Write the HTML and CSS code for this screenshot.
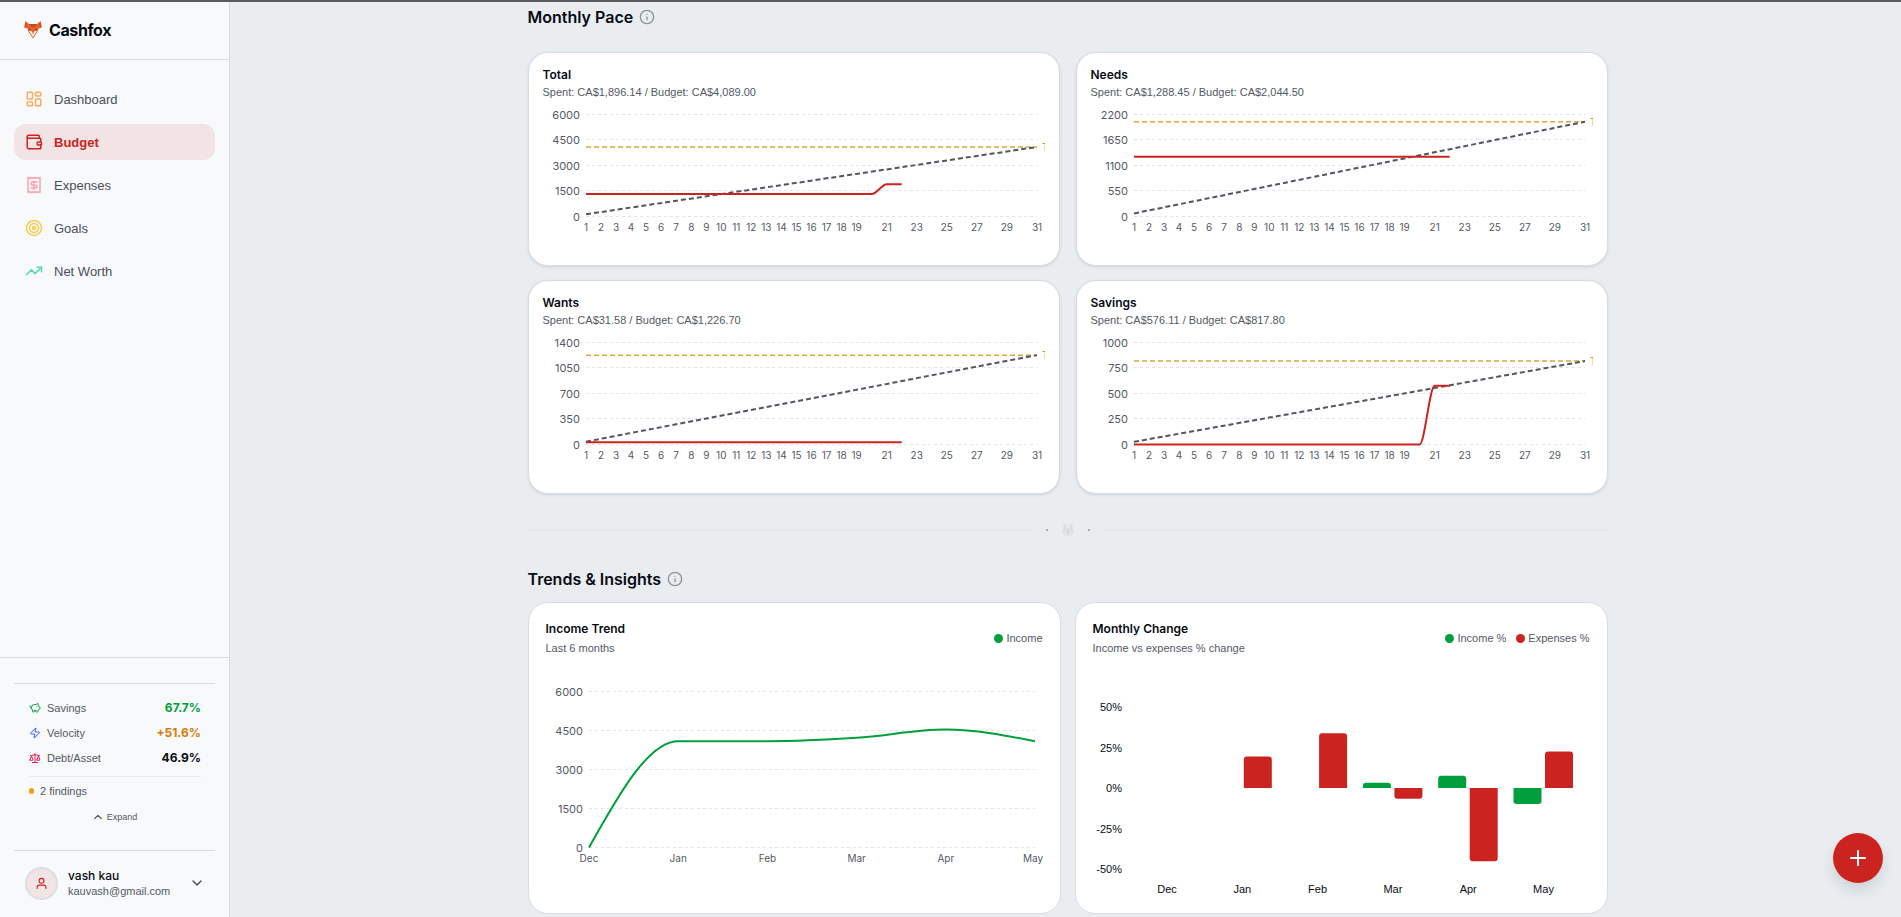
FILE: index.html
```html
<!DOCTYPE html>
<html lang="en">
<head>
    <meta charset="UTF-8">
    <meta name="viewport" content="width=device-width, initial-scale=1.0">
    <title>Cashfox - Budget</title>
    <link rel="stylesheet" href="styles.css">
</head>
<body>

    <aside class="sidebar">
        <a href="#" class="brand">
            <svg class="brand-logo" viewBox="0 0 18 18" aria-hidden="true">
                <path fill="#e8602f" d="M1.500 0 L5 3 H13 L16.500 0 L18 6.500 L14.500 7.500 L14 10 L9 17.500 L4 10 L3.500 7.500 L0 6.500 Z"/>
                <path fill="#c24a22" d="M5 3 H13 L11 6 H7 Z M1.500 1 L3 4 L1 6 Z M16.500 1 L15 4 L17 6 Z"/>
                <path fill="#fff" d="M4.800 9.500 L8 10.500 L9 14 L10 10.500 L13.200 9.500 L9 16 Z"/>
                <path fill="#3a2a28" d="M5 7.500 L7 8.500 L5.500 9 Z M13 7.500 L11 8.500 L12.500 9 Z"/>
            </svg>
            Cashfox
        </a>

        <nav class="nav">
            <a href="#" class="nav-link dashboard">
                <svg viewBox="0 0 24 24"><rect width="7" height="9" x="3" y="3" rx="1"/><rect width="7" height="5" x="14" y="3" rx="1"/><rect width="7" height="9" x="14" y="12" rx="1"/><rect width="7" height="5" x="3" y="16" rx="1"/></svg>
                Dashboard
            </a>
            <a href="#" class="nav-link active">
                <svg viewBox="0 0 24 24"><path d="M19 7V4a1 1 0 0 0-1-1H5a2 2 0 0 0 0 4h15a1 1 0 0 1 1 1v4h-3a2 2 0 0 0 0 4h3a1 1 0 0 0 1-1v-2a1 1 0 0 0-1-1"/><path d="M3 5v14a2 2 0 0 0 2 2h15a1 1 0 0 0 1-1v-4"/></svg>
                Budget
            </a>
            <a href="#" class="nav-link expenses">
                <svg viewBox="0 0 24 24"><path d="M4 2v20l2-1 2 1 2-1 2 1 2-1 2 1 2-1 2 1V2l-2 1-2-1-2 1-2-1-2 1-2-1-2 1Z"/><path d="M16 8h-6a2 2 0 1 0 0 4h4a2 2 0 1 1 0 4H8"/><path d="M12 17.500v-11"/></svg>
                Expenses
            </a>
            <a href="#" class="nav-link goals">
                <svg viewBox="0 0 24 24"><circle cx="12" cy="12" r="10"/><circle cx="12" cy="12" r="6"/><circle cx="12" cy="12" r="2"/></svg>
                Goals
            </a>
            <a href="#" class="nav-link networth">
                <svg viewBox="0 0 24 24"><path d="M22 7 13.500 15.500 8.500 10.500 2 17"/><path d="M16 7h6v6"/></svg>
                Net Worth
            </a>
        </nav>

        <div class="sidebar-bottom">
            <div class="health">
                <div class="health-row">
                    <svg class="green" viewBox="0 0 24 24"><path d="M11 17h3v2a1 1 0 0 0 1 1h2a1 1 0 0 0 1-1v-3a3.160 3.160 0 0 0 2-2h1a1 1 0 0 0 1-1v-2a1 1 0 0 0-1-1h-1a5 5 0 0 0-2-4V3a4 4 0 0 0-3.200 1.600l-.3.400H11a6 6 0 0 0-6 6v1a5 5 0 0 0 2 4v3a1 1 0 0 0 1 1h2a1 1 0 0 0 1-1z"/><path d="M16 10h.01"/><path d="M2 8v1a2 2 0 0 0 2 2h1"/></svg>
                    <span>Savings</span>
                    <strong class="green">67.7%</strong>
                </div>
                <div class="health-row">
                    <svg class="blue" viewBox="0 0 24 24"><path d="M4 14a1 1 0 0 1-.78-1.630l9.900-10.200a.5.5 0 0 1 .86.460l-1.920 6.020A1 1 0 0 0 13 10h7a1 1 0 0 1 .78 1.630l-9.900 10.200a.5.5 0 0 1-.86-.46l1.920-6.020A1 1 0 0 0 11 14z"/></svg>
                    <span>Velocity</span>
                    <strong class="orange">+51.6%</strong>
                </div>
                <div class="health-row">
                    <svg class="pink" viewBox="0 0 24 24"><path d="m16 16 3-8 3 8c-.87.650-1.920 1-3 1s-2.130-.35-3-1Z"/><path d="m2 16 3-8 3 8c-.87.650-1.920 1-3 1s-2.130-.35-3-1Z"/><path d="M7 21h10"/><path d="M12 3v18"/><path d="M3 7h2c2 0 5-1 7-2 2 1 5 2 7 2h2"/></svg>
                    <span>Debt/Asset</span>
                    <strong>46.9%</strong>
                </div>
                <div class="findings"><i></i>2 findings</div>
                <button class="expand" type="button">
                    <svg viewBox="0 0 24 24"><path d="m20 16-8-8-8 8"/></svg>
                    Expand
                </button>
            </div>

            <button class="user" type="button">
                <span class="avatar">
                    <svg viewBox="0 0 24 24"><circle cx="12" cy="7" r="4.500"/><path d="M20 21v-2a4 4 0 0 0-4-4H8a4 4 0 0 0-4 4v2"/></svg>
                </span>
                <span class="user-text">
                    <span class="user-name">vash kau</span>
                    <span class="user-mail">kauvash@gmail.com</span>
                </span>
                <svg class="chevron" viewBox="0 0 24 24"><path d="m6 9 6 6 6-6"/></svg>
            </button>
        </div>
    </aside>

    <main class="main">
        <div class="content">
            <h2 class="section-title">
                Monthly Pace
                <svg viewBox="0 0 24 24"><circle cx="12" cy="12" r="10"/><path d="M12 16v-4"/><path d="M12 8h.01"/></svg>
            </h2>

            <section class="pace-grid">
                <article class="card pace-card">
                    <h3>Total</h3>
                    <p>Spent: CA$1,896.14 / Budget: CA$4,089.00</p>
                    <svg class="chart" id="pace-total" viewBox="0 0 502 144"></svg>
                </article>
                <article class="card pace-card">
                    <h3>Needs</h3>
                    <p>Spent: CA$1,288.45 / Budget: CA$2,044.50</p>
                    <svg class="chart" id="pace-needs" viewBox="0 0 502 144"></svg>
                </article>
                <article class="card pace-card">
                    <h3>Wants</h3>
                    <p>Spent: CA$31.58 / Budget: CA$1,226.70</p>
                    <svg class="chart" id="pace-wants" viewBox="0 0 502 144"></svg>
                </article>
                <article class="card pace-card">
                    <h3>Savings</h3>
                    <p>Spent: CA$576.11 / Budget: CA$817.80</p>
                    <svg class="chart" id="pace-savings" viewBox="0 0 502 144"></svg>
                </article>
            </section>

            <div class="divider">
                <span class="line"></span>
                <span class="dot"></span>
                <svg viewBox="0 0 12 14" aria-hidden="true"><path fill="#dcdfe0" d="M2 1 Q3 0 4 1 L5 5 H7 L8 1 Q9 0 10 1 L11 6 L12 9 Q10 13 6 13 Q2 13 0 9 L1 6 Z"/><path fill="#e4e7e8" d="M1 9 L5 9 L6 12 L7 9 L11 9 L9 12 H3 Z"/><path fill="#bfc2c4" d="M5 9h2l-1 2z"/></svg>
                <span class="dot"></span>
                <span class="line"></span>
            </div>

            <h2 class="section-title">
                Trends &amp; Insights
                <svg viewBox="0 0 24 24"><circle cx="12" cy="12" r="10"/><path d="M12 16v-4"/><path d="M12 8h.01"/></svg>
            </h2>

            <section class="trend-grid">
                <article class="card trend-card">
                    <header>
                        <div>
                            <h3>Income Trend</h3>
                            <p>Last 6 months</p>
                        </div>
                        <div class="legend">
                            <span><i class="bg-green"></i>Income</span>
                        </div>
                    </header>
                    <svg class="chart" id="income-trend" viewBox="0 0 497 230"></svg>
                </article>
                <article class="card trend-card">
                    <header>
                        <div>
                            <h3>Monthly Change</h3>
                            <p>Income vs expenses % change</p>
                        </div>
                        <div class="legend">
                            <span><i class="bg-green"></i>Income %</span>
                            <span><i class="bg-red"></i>Expenses %</span>
                        </div>
                    </header>
                    <svg class="chart" id="monthly-change" viewBox="0 0 497 230"></svg>
                </article>
            </section>
        </div>
    </main>

    <button class="fab" type="button" aria-label="Add">
        <svg viewBox="0 0 24 24"><path d="M5 12h14"/><path d="M12 5v14"/></svg>
    </button>

    <script src="script.js"></script>
</body>
</html>
```
FILE: styles.css
```css
* {
    box-sizing: border-box;
}

body {
    margin: 0;
    height: 100vh;
    overflow: hidden;
    display: flex;
    border-top: 2px solid #5b5a5c;
    background: #e9edf0;
    color: #070b14;
    font-family: "Liberation Sans", Arial, sans-serif;
    font-size: 13px;
}

h2, h3, p {
    margin: 0;
}

h2, h3, strong, .brand, .user-name {
    font-family: Inter, "Liberation Sans", sans-serif;
}

a {
    color: inherit;
    text-decoration: none;
}

button {
    font-family: inherit;
    color: inherit;
    border: none;
    background: none;
    padding: 0;
    cursor: pointer;
}

svg {
    fill: none;
    stroke: currentColor;
    stroke-width: 2;
    stroke-linecap: round;
    stroke-linejoin: round;
    flex-shrink: 0;
}

/* sidebar */
.sidebar {
    width: 230px;
    flex-shrink: 0;
    display: flex;
    flex-direction: column;
    background: #f7f9fb;
    border-right: 1px solid #d8dbe1;
}

.brand {
    height: 58px;
    display: flex;
    align-items: center;
    gap: 7px;
    padding: 0 24px 2px;
    border-bottom: 1px solid #d8dbe1;
    font-size: 16px;
    font-weight: 700;
    letter-spacing: -0.4px;
}

.brand-logo {
    width: 18px;
    height: 18px;
    stroke: none;
}

.nav {
    flex: 1;
    display: flex;
    flex-direction: column;
    gap: 7px;
    padding: 21px 14px;
}

.nav-link {
    height: 36px;
    display: flex;
    align-items: center;
    gap: 11px;
    padding: 0 11px;
    border-radius: 12px;
    color: #4a4f5a;
    font-weight: 500;
}

.nav-link svg {
    width: 18px;
    height: 18px;
}

.nav-link.active {
    background: #f2e3e4;
    color: #cb2420;
    font-weight: 600;
}

.dashboard svg { color: #fbab5c; }
.expenses svg { color: #fba3b3; }
.goals svg { color: #f9cb4a; }
.networth svg { color: #58dcae; }

.sidebar-bottom {
    padding: 25px 14px 12px;
    border-top: 1px solid #d8dbe1;
}

.health {
    padding: 11px 14px 0 15px;
    border-top: 1px solid #d8dbe1;
    border-bottom: 1px solid #d8dbe1;
    height: 168px;
}

.health-row {
    height: 25px;
    display: flex;
    align-items: center;
    gap: 6px;
    color: #545964;
    font-size: 11px;
}

.health-row svg {
    width: 12px;
    height: 12px;
}

.health-row strong {
    margin-left: auto;
    color: #070b14;
    font-size: 12px;
}

.health-row .green { color: #009e3c; }
.health-row .blue { color: #3b5bf0; }
.health-row .orange { color: #d97a06; }
.health-row .pink { color: #ec1556; }

.findings {
    margin-top: 6px;
    padding-top: 5px;
    border-top: 1px solid #e6e9ed;
    display: flex;
    align-items: center;
    gap: 6px;
    line-height: 18px;
    font-size: 11px;
    color: #545964;
}

.findings i {
    width: 5px;
    height: 6px;
    border-radius: 3px;
    background: #f59e0b;
}

.expand {
    width: 100%;
    height: 16px;
    margin-top: 9px;
    display: flex;
    align-items: center;
    justify-content: center;
    gap: 4px;
    font-size: 9px;
    color: #545964;
}

.expand svg {
    width: 10px;
    height: 10px;
    stroke-width: 3;
}

.user {
    width: 100%;
    height: 54px;
    display: flex;
    align-items: center;
    padding: 10px 10px 0 11px;
    text-align: left;
}

.avatar {
    width: 33px;
    height: 33px;
    display: flex;
    align-items: center;
    justify-content: center;
    margin-right: 10px;
    border: 2px solid #dbdfe5;
    border-radius: 50%;
    background: #f2e3e4;
    color: #cb2420;
}

.avatar svg {
    width: 13px;
    height: 13px;
}

.user-text {
    flex: 1;
    display: flex;
    flex-direction: column;
}

.user-name {
    font-size: 12px;
    font-weight: 500;
    line-height: 17px;
}

.user-mail {
    font-size: 11px;
    line-height: 15px;
    color: #545964;
}

.chevron {
    width: 16px;
    height: 16px;
    color: #3f444e;
}

/* page content */
.main {
    flex: 1;
    min-width: 0;
    padding: 3px 0 0 4px;
}

.content {
    max-width: 1080px;
    margin: 0 auto;
}

.section-title {
    display: flex;
    align-items: center;
    gap: 6px;
    line-height: 24px;
    font-size: 16px;
    font-weight: 600;
}

.section-title svg {
    width: 16px;
    height: 16px;
    color: #8e939b;
}

.card {
    background: #fff;
    border: 1px solid #d8dbe1;
    border-radius: 20px;
}

.card h3 {
    font-size: 12px;
    font-weight: 600;
}

.card p {
    font-size: 11px;
    color: #545964;
}

.chart {
    display: block;
    width: 100%;
    overflow: hidden;
}

.pace-grid {
    display: grid;
    grid-template-columns: 1fr 1fr;
    gap: 14px 16px;
    margin-top: 23px;
}

.pace-card {
    padding: 14px;
    box-shadow: 0 1px 3px rgba(20, 30, 50, 0.12);
}

.pace-card h3 {
    line-height: 16px;
}

.pace-card p {
    line-height: 18px;
    margin-bottom: 6px;
}

.divider {
    display: flex;
    align-items: center;
    margin: 28px 0 29px;
    height: 16px;
}

.divider .line {
    flex: 1;
    height: 1px;
    background: #e2e5e8;
}

.divider .dot {
    width: 2px;
    height: 2px;
    margin: 0 14px;
    background: #a9adb3;
}

.divider svg {
    width: 12px;
    height: 14px;
    stroke: none;
}

.trend-grid {
    display: grid;
    grid-template-columns: 1fr 1fr;
    gap: 14px;
    margin-top: 11px;
}

.trend-card {
    padding: 17px;
}

.trend-card header {
    display: flex;
    align-items: center;
    justify-content: space-between;
    margin-bottom: 8px;
}

.trend-card h3 {
    line-height: 18px;
}

.trend-card p {
    line-height: 20px;
}

.legend {
    display: flex;
    gap: 10px;
    line-height: 16px;
    padding-bottom: 2px;
    font-size: 11px;
    color: #545964;
}

.legend span {
    display: flex;
    align-items: center;
    gap: 3px;
}

.legend i {
    width: 9px;
    height: 9px;
    border-radius: 50%;
}

.bg-green { background: #009e3c; }
.bg-red { background: #cb2420; }

/* chart parts */
.chart text {
    stroke: none;
    fill: #545964;
    font-family: Inter, "Liberation Sans", sans-serif;
    font-size: 10px;
}

.chart .tick-y {
    font-size: 11px;
}

.chart .dark {
    fill: #070b14;
    font-family: "Liberation Sans", Arial, sans-serif;
    font-size: 11px;
}

.chart .grid {
    stroke: #e1e4e9;
    stroke-width: 1;
    stroke-dasharray: 3 3;
    stroke-linecap: butt;
}

.chart .target {
    stroke: #dba53a;
    stroke-dasharray: 5 3;
    stroke-linecap: butt;
}

.chart .ideal {
    stroke: #51565f;
    stroke-dasharray: 5 3;
    stroke-linecap: butt;
}

.chart .spent {
    stroke: #cb2420;
    stroke-linecap: butt;
}

.chart .income {
    stroke: #009e3c;
    stroke-linecap: butt;
}

.chart .bar-green {
    stroke: none;
    fill: #009e3c;
}

.chart .bar-red {
    stroke: none;
    fill: #cb2420;
}

.chart .target-label {
    fill: #a87f2c;
}

/* floating action button */
.fab {
    position: fixed;
    right: 18px;
    bottom: 34px;
    width: 50px;
    height: 50px;
    display: flex;
    align-items: center;
    justify-content: center;
    border-radius: 50%;
    background: #cb2420;
    color: #fff;
    box-shadow: 0 8px 14px rgba(20, 30, 50, 0.12);
}

.fab svg {
    width: 24px;
    height: 24px;
}
```
FILE: script.js
```js
const NS = 'http://www.w3.org/2000/svg';

function add(svg, tag, attrs, text) {
    const el = document.createElementNS(NS, tag);
    for (const key in attrs) {
        el.setAttribute(key, attrs[key]);
    }
    if (text !== undefined) {
        el.textContent = text;
    }
    svg.appendChild(el);
    return el;
}

function label(svg, x, y, text, anchor, cls) {
    add(svg, 'text', { x: x, y: y, 'text-anchor': anchor, 'dominant-baseline': 'central', class: cls || '' }, text);
}

// monotone cubic curve through the points
function curve(points) {
    const n = points.length;
    const slopes = [];
    const tangents = [];
    for (let i = 0; i < n - 1; i++) {
        slopes.push((points[i + 1][1] - points[i][1]) / (points[i + 1][0] - points[i][0]));
    }
    for (let i = 1; i < n - 1; i++) {
        const a = slopes[i - 1];
        const b = slopes[i];
        tangents[i] = (Math.sign(a) + Math.sign(b)) * Math.min(Math.abs(a), Math.abs(b), Math.abs(a + b) / 4) || 0;
    }
    tangents[0] = (3 * slopes[0] - tangents[1]) / 2;
    tangents[n - 1] = (3 * slopes[n - 2] - tangents[n - 2]) / 2;

    let d = 'M' + points[0].join(' ');
    for (let i = 1; i < n; i++) {
        const [x0, y0] = points[i - 1];
        const [x1, y1] = points[i];
        const dx = (x1 - x0) / 3;
        d += 'C' + [x0 + dx, y0 + dx * tangents[i - 1], x1 - dx, y1 - dx * tangents[i], x1, y1].join(' ');
    }
    return d;
}

function gridLines(svg, max, left, right, top, bottom) {
    for (let i = 0; i <= 4; i++) {
        const y = Math.floor(bottom - (bottom - top) * i / 4) + 0.5;
        add(svg, 'path', { class: 'grid', d: `M${left} ${y}H${right}` });
        label(svg, left - 6, y, max * i / 4, 'end', 'tick-y');
    }
}

function paceChart(id, max, budget, spent) {
    const svg = document.getElementById(id);
    const left = 43, right = 494, top = 7, bottom = 109;
    const x = day => left + (right - left) * (day - 1) / 30;
    const y = value => bottom + 0.5 - (bottom - top) * value / max;

    gridLines(svg, max, left, right, top, bottom);
    for (let day = 1; day <= 31; day++) {
        if (day < 20 || day % 2) {
            label(svg, x(day), 120, day, 'middle');
        }
    }
    add(svg, 'path', { class: 'target', 'stroke-width': 1.5, d: `M${left} ${y(budget)}H${right}` });
    label(svg, right + 5, y(budget), 'Target', 'start', 'target-label');
    add(svg, 'path', { class: 'ideal', d: `M${left} ${y(budget / 31)}L${right} ${y(budget)}` });
    add(svg, 'path', { class: 'spent', d: curve(spent.map((value, i) => [x(i + 1), y(value)])) });
}

function days(start, end) {
    return Array(20).fill(start).concat([end, end]);
}

paceChart('pace-total', 6000, 4089, days(1320.03, 1896.14));
paceChart('pace-needs', 2200, 2044.5, days(1288.45, 1288.45));
paceChart('pace-wants', 1400, 1226.7, days(31.58, 31.58));
paceChart('pace-savings', 1000, 817.8, days(0, 576.11));

const months = ['Dec', 'Jan', 'Feb', 'Mar', 'Apr', 'May'];

function incomeChart() {
    const svg = document.getElementById('income-trend');
    const income = [0, 4089, 4089, 4220, 4536, 4089];
    const left = 43, right = 489, top = 25, bottom = 181;
    const x = i => left + (right - left) * i / 5;

    gridLines(svg, 6000, left, right, top, bottom);
    months.forEach((month, i) => label(svg, i === 5 ? x(i) - 2 : x(i), 192, month, 'middle'));
    add(svg, 'path', {
        class: 'income',
        d: curve(income.map((value, i) => [x(i), bottom + 0.5 - (bottom - top) * value / 6000]))
    });
}

function bar(svg, x, zero, value, cls) {
    const w = 28, r = 3;
    const h = Math.abs(value) * 1.62;
    const s = value > 0 ? -1 : 1;
    if (!value) return;
    add(svg, 'path', {
        class: cls,
        d: `M${x} ${zero}V${zero + s * (h - r)}Q${x} ${zero + s * h} ${x + r} ${zero + s * h}H${x + w - r}Q${x + w} ${zero + s * h} ${x + w} ${zero + s * (h - r)}V${zero}Z`
    });
}

function changeChart() {
    const svg = document.getElementById('monthly-change');
    const income = [0, 0, 0, 3.2, 7.5, -9.8];
    const expenses = [0, 19.5, 33.8, -6.7, -45.2, 22.5];
    const zero = 122;

    [50, 25, 0, -25, -50].forEach(v => label(svg, 29, zero - v * 1.62, v + '%', 'end', 'dark'));
    months.forEach((month, i) => {
        const center = 74 + i * 75.3;
        bar(svg, center - 30, zero, income[i], 'bar-green');
        bar(svg, center + 1.5, zero, expenses[i], 'bar-red');
        label(svg, center, 223, month, 'middle', 'dark');
    });
}

incomeChart();
changeChart();
```
